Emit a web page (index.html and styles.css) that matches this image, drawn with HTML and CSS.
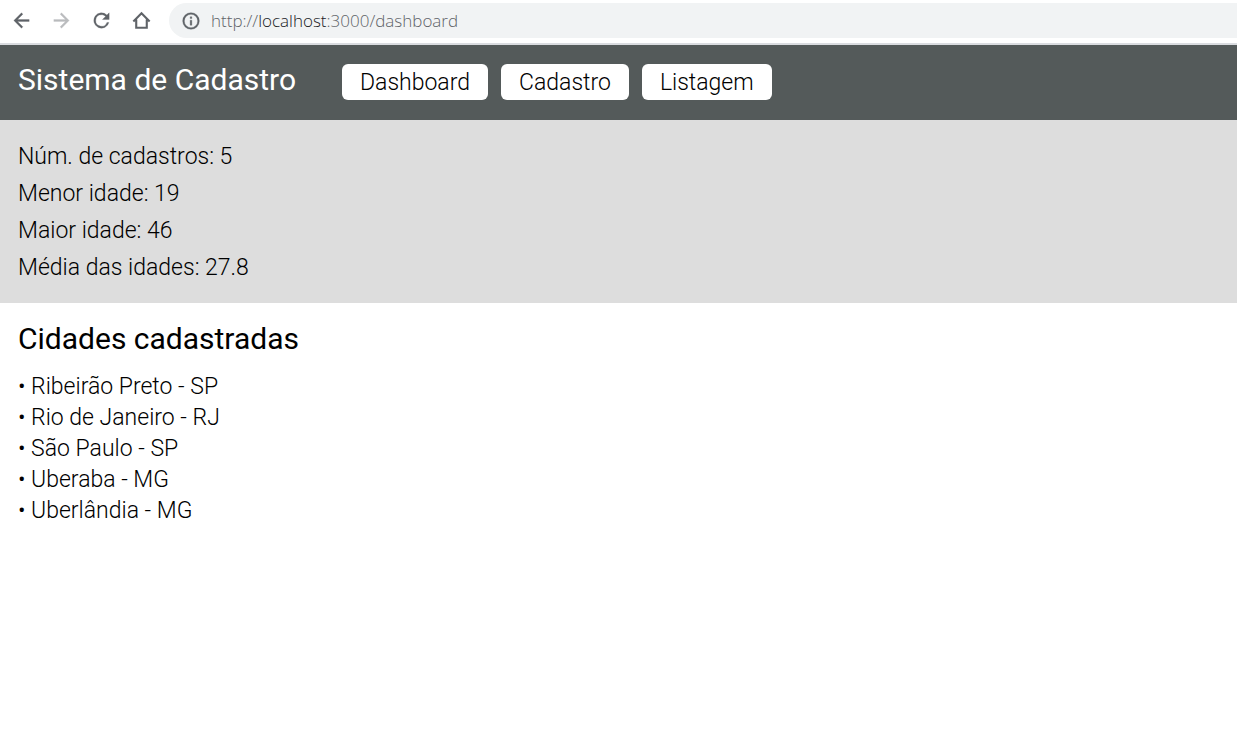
FILE: index.html
```html
<!DOCTYPE html>
<html lang="pt-BR">
<head>
<meta charset="utf-8">
<meta name="viewport" content="width=device-width, initial-scale=1">
<title>Sistema de Cadastro</title>
<link rel="stylesheet" href="styles.css">
</head>
<body>
<div class="toolbar">
  <div class="toolbar-actions">
    <button class="tool" type="button" aria-label="Voltar"><svg viewBox="0 0 24 24"><path d="M20 11H7.830l5.590-5.590L12 4l-8 8 8 8 1.410-1.410L7.830 13H20z"/></svg></button>
    <button class="tool" type="button" aria-label="Avançar" disabled><svg viewBox="0 0 24 24"><path d="M4 13h12.170l-5.590 5.590L12 20l8-8-8-8-1.410 1.410L16.170 11H4z"/></svg></button>
    <button class="tool" type="button" aria-label="Recarregar"><svg viewBox="0 0 24 24"><path d="M17.650 6.350A8 8 0 1 0 19.730 14h-2.080A6 6 0 1 1 12 6c1.660 0 3.140.69 4.220 1.780L13 11h7V4z"/></svg></button>
    <button class="tool" type="button" aria-label="Página inicial"><svg viewBox="0 0 24 24"><path class="outline" d="M3.500 13 12 4.500l8.500 8.500M6.500 11v8.500h11V11"/></svg></button>
  </div>
  <div class="address">
    <svg class="info" viewBox="0 0 24 24" aria-hidden="true"><path d="M11 17h2v-6h-2zm1-15a10 10 0 1 0 0 20 10 10 0 0 0 0-20zm0 18a8 8 0 1 1 0-16 8 8 0 0 1 0 16zM11 9h2V7h-2z"/></svg>
    <span class="url">http://<span class="host">localhost</span>:3000/dashboard</span>
  </div>
</div>
<header class="header">
  <h1 class="title">Sistema de Cadastro</h1>
  <nav class="menu">
    <a class="menu-link" href="#dashboard">Dashboard</a>
    <a class="menu-link" href="#cadastro">Cadastro</a>
    <a class="menu-link" href="#listagem">Listagem</a>
  </nav>
</header>
<main>
  <section class="summary">
    <p>Núm. de cadastros: 5</p>
    <p>Menor idade: 19</p>
    <p>Maior idade: 46</p>
    <p>Média das idades: 27.8</p>
  </section>
  <section class="cities">
    <h2 class="title">Cidades cadastradas</h2>
    <ul class="city-list">
      <li>Ribeirão Preto - SP</li>
      <li>Rio de Janeiro - RJ</li>
      <li>São Paulo - SP</li>
      <li>Uberaba - MG</li>
      <li>Uberlândia - MG</li>
    </ul>
  </section>
</main>
</body>
</html>
```
FILE: styles.css
```css
* { box-sizing: border-box; margin: 0; padding: 0; }
body { background: #fff; color: #000; font: 350 23px/31px Roboto, sans-serif; }
.toolbar { display: flex; gap: 16px; padding: 3px 0 5px 10px; border-bottom: 2px solid #dadce0; }
.toolbar-actions { display: flex; align-items: center; gap: 17px; }
.tool { width: 23px; height: 23px; border: 0; background: none; color: #5f6368; }
.tool:disabled { color: #babcbe; }
.tool svg { display: block; width: 23px; height: 23px; fill: currentColor; stroke: currentColor; stroke-width: 0.3; }
.tool .outline { fill: none; stroke-width: 2.2; }
.address { display: flex; flex: 1; align-items: center; gap: 10px; height: 35px; padding-left: 12px; border-radius: 18px 0 0 18px; background: #f1f3f4; color: #5f6368; }
.info { width: 20px; height: 20px; fill: currentColor; stroke: currentColor; stroke-width: 0.4; }
.url { font: 350 17px/24px "Open Sans", sans-serif; }
.host { color: #202124; }
.header { display: flex; align-items: flex-start; gap: 46px; padding: 19px 18px 20px; background: #545a5a; }
.title { font-size: 30px; font-weight: 400; line-height: 32px; }
.header .title { color: #fff; }
.menu { display: flex; flex-wrap: wrap; gap: 13px; }
.menu-link { padding: 1px 18px 0; border-radius: 6px; background: #fff; color: #000; line-height: 35px; text-decoration: none; }
.summary { padding: 18px 18px 17px; background: #ddd; line-height: 37px; }
.cities { padding: 20px 18px; }
.city-list { margin-top: 16px; list-style: none; }
.city-list li::before { content: "• "; }
```
